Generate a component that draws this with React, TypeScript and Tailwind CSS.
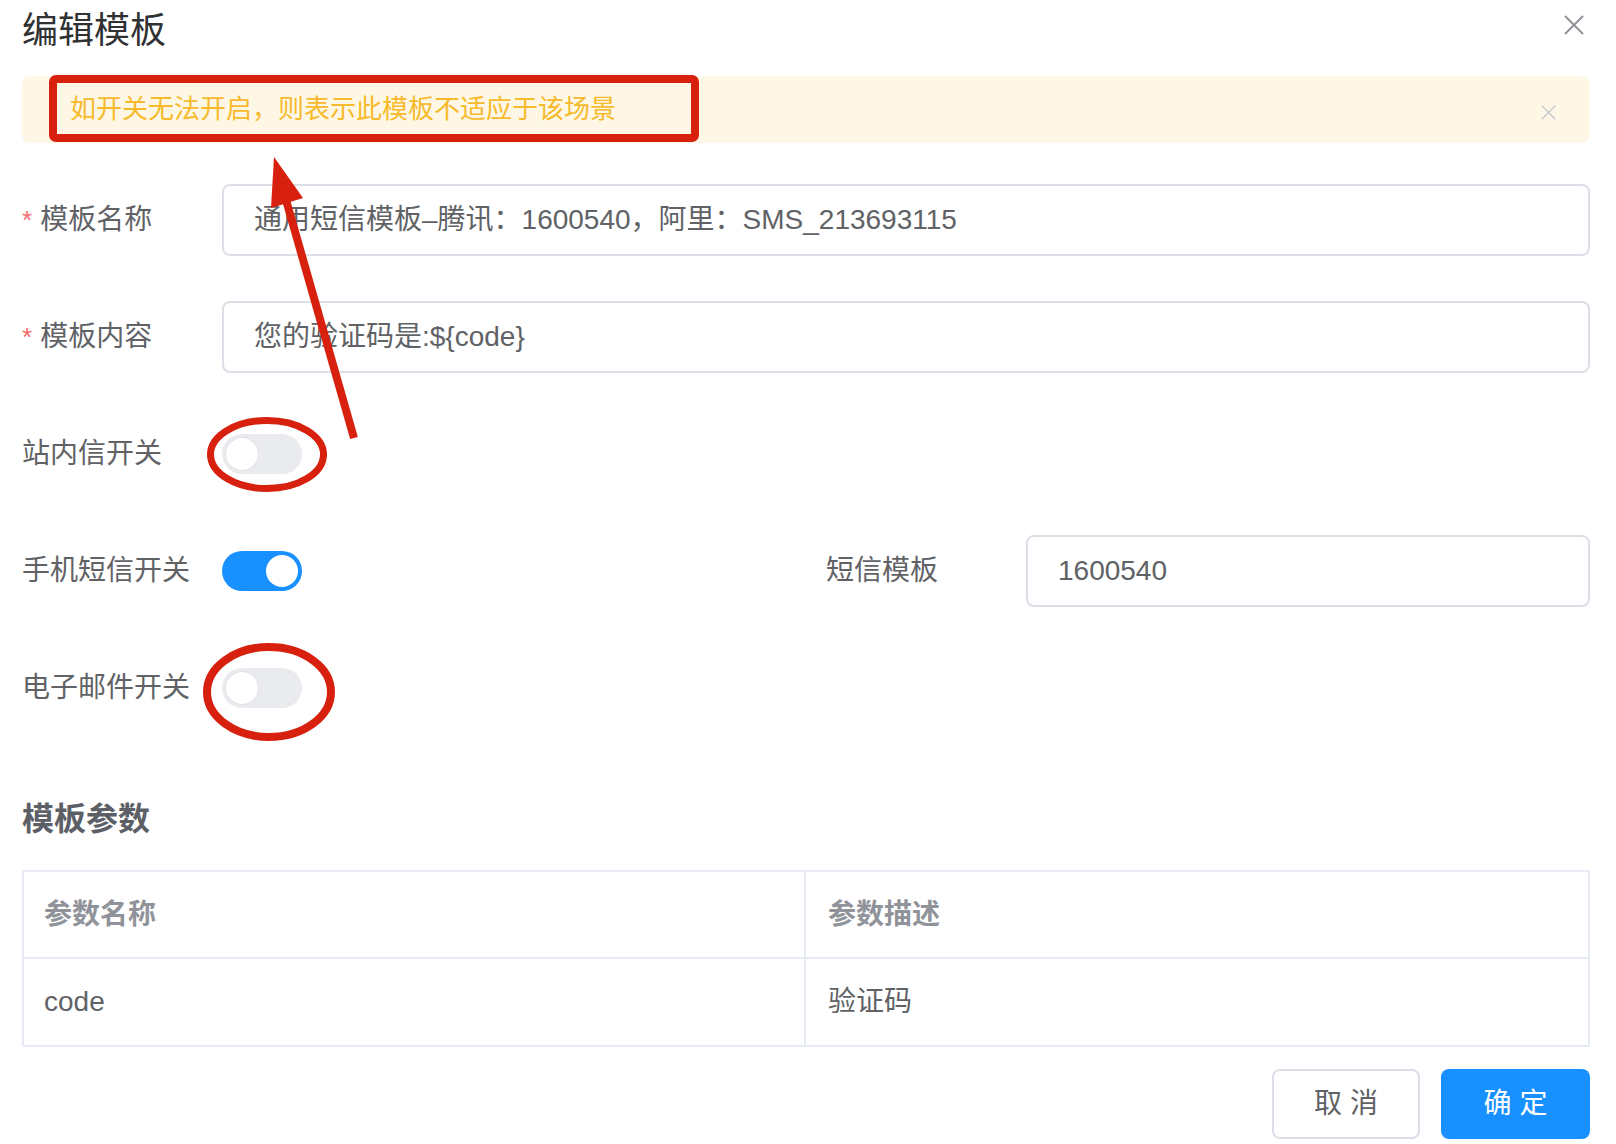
import React from 'react';

const FONT = '"Liberation Sans", "Noto Sans CJK SC", sans-serif';

const Switch: React.FC<{ on?: boolean }> = ({ on }) => (
  <div
    className={`relative w-[80px] h-[40px] rounded-full ${on ? 'bg-[#1890ff]' : 'bg-[#eaebef]'}`}
  >
    <div
      className={`absolute top-[4px] w-[32px] h-[32px] rounded-full bg-white ${
        on ? 'right-[4px]' : 'left-[4px] shadow-[0_0_0_1px_#e2e3e7]'
      }`}
    />
  </div>
);

const Label: React.FC<{ text: string; required?: boolean }> = ({ text, required }) => (
  <div className="w-[200px] shrink-0 text-[28px] leading-[40px] text-[#606266]">
    {required && <span className="text-[#f56c6c] mr-[8px] align-top text-[26px]">*</span>}
    {text}
  </div>
);

const Input: React.FC<{ value: string }> = ({ value }) => (
  <div className="flex-1 h-[72px] flex items-center border-2 border-[#dcdfe6] rounded-[8px] pl-[30px] text-[28px] text-[#606266]">
    {value}
  </div>
);

const CloseIcon: React.FC<{ size: number; color: string; width: number }> = ({ size, color, width }) => (
  <svg width={size} height={size} viewBox="0 0 20 20">
    <path d="M1 1 L19 19 M19 1 L1 19" stroke={color} strokeWidth={width} fill="none" />
  </svg>
);

export default function App() {
  return (
    <div className="relative w-[1616px] h-[1144px] bg-white overflow-hidden" style={{ fontFamily: FONT }}>
      <div className="pl-[22px] pr-[26px]">
        {/* header */}
        <div className="pt-[6px] text-[36px] leading-[50px] text-[#303133]">编辑模板</div>
        <div className="absolute top-[15px] left-[1564px]">
          <CloseIcon size={20} color="#909399" width={2} />
        </div>

        {/* alert */}
        <div className="mt-[20px] h-[67px] rounded-[8px] bg-[#fef7e6] flex items-center justify-between pl-[48px] pr-[34px]">
          <span className="text-[26px] text-[#f7ba2a]">如开关无法开启，则表示此模板不适应于该场景</span>
          <span className="mt-[5px]">
            <CloseIcon size={15} color="#c0c4cc" width={1.6} />
          </span>
        </div>

        {/* form */}
        <div className="mt-[37px] flex flex-col gap-[37px]">
          <div className="h-[80px] flex items-center">
            <Label text="模板名称" required />
            <Input value="通用短信模板–腾讯：1600540，阿里：SMS_213693115" />
          </div>
          <div className="h-[80px] flex items-center">
            <Label text="模板内容" required />
            <Input value="您的验证码是:${code}" />
          </div>
          <div className="h-[80px] flex items-center">
            <Label text="站内信开关" />
            <Switch />
          </div>
          <div className="h-[80px] flex items-center">
            <div className="w-[804px] shrink-0 flex items-center">
              <Label text="手机短信开关" />
              <Switch on />
            </div>
            <Label text="短信模板" />
            <Input value="1600540" />
          </div>
          <div className="h-[80px] flex items-center">
            <Label text="电子邮件开关" />
            <Switch />
          </div>
        </div>

        {/* params */}
        <div className="mt-[69px] text-[32px] leading-[44px] font-bold text-[#5c6066]">模板参数</div>
        <div className="mt-[29px] border-2 border-[#e6ebf3] text-[28px]">
          <div className="grid grid-cols-2 h-[87px] border-b-2 border-[#e6ebf3]">
            <div className="flex items-center pl-[20px] border-r-2 border-[#e6ebf3] text-[#909399] font-semibold">参数名称</div>
            <div className="flex items-center pl-[22px] text-[#909399] font-semibold">参数描述</div>
          </div>
          <div className="grid grid-cols-2 h-[86px]">
            <div className="flex items-center pl-[20px] border-r-2 border-[#e6ebf3] text-[#606266]">code</div>
            <div className="flex items-center pl-[22px] text-[#606266]">验证码</div>
          </div>
        </div>

        {/* footer */}
        <div className="mt-[22px] flex justify-end gap-[21px]">
          <button className="w-[148px] h-[70px] rounded-[8px] border-2 border-[#dcdfe6] bg-white text-[28px] text-[#606266]">
            取 消
          </button>
          <button className="w-[149px] h-[70px] rounded-[8px] bg-[#1890ff] text-[28px] text-white">
            确 定
          </button>
        </div>
      </div>

      {/* red annotations drawn on top */}
      <svg className="absolute inset-0 pointer-events-none" width="1616" height="1144" viewBox="0 0 1616 1144">
        <rect x="53" y="79" width="642" height="59" rx="3" fill="none" stroke="#d8200f" strokeWidth="8" />
        <ellipse cx="267" cy="454.5" rx="56.5" ry="34" fill="none" stroke="#d8200f" strokeWidth="7" />
        <ellipse cx="269" cy="692" rx="62" ry="45" fill="none" stroke="#d8200f" strokeWidth="8" />
        <line x1="354" y1="438" x2="286" y2="200" stroke="#d8200f" strokeWidth="8" />
        <polygon points="274,157 303,198 271,208" fill="#d8200f" />
      </svg>
    </div>
  );
}
